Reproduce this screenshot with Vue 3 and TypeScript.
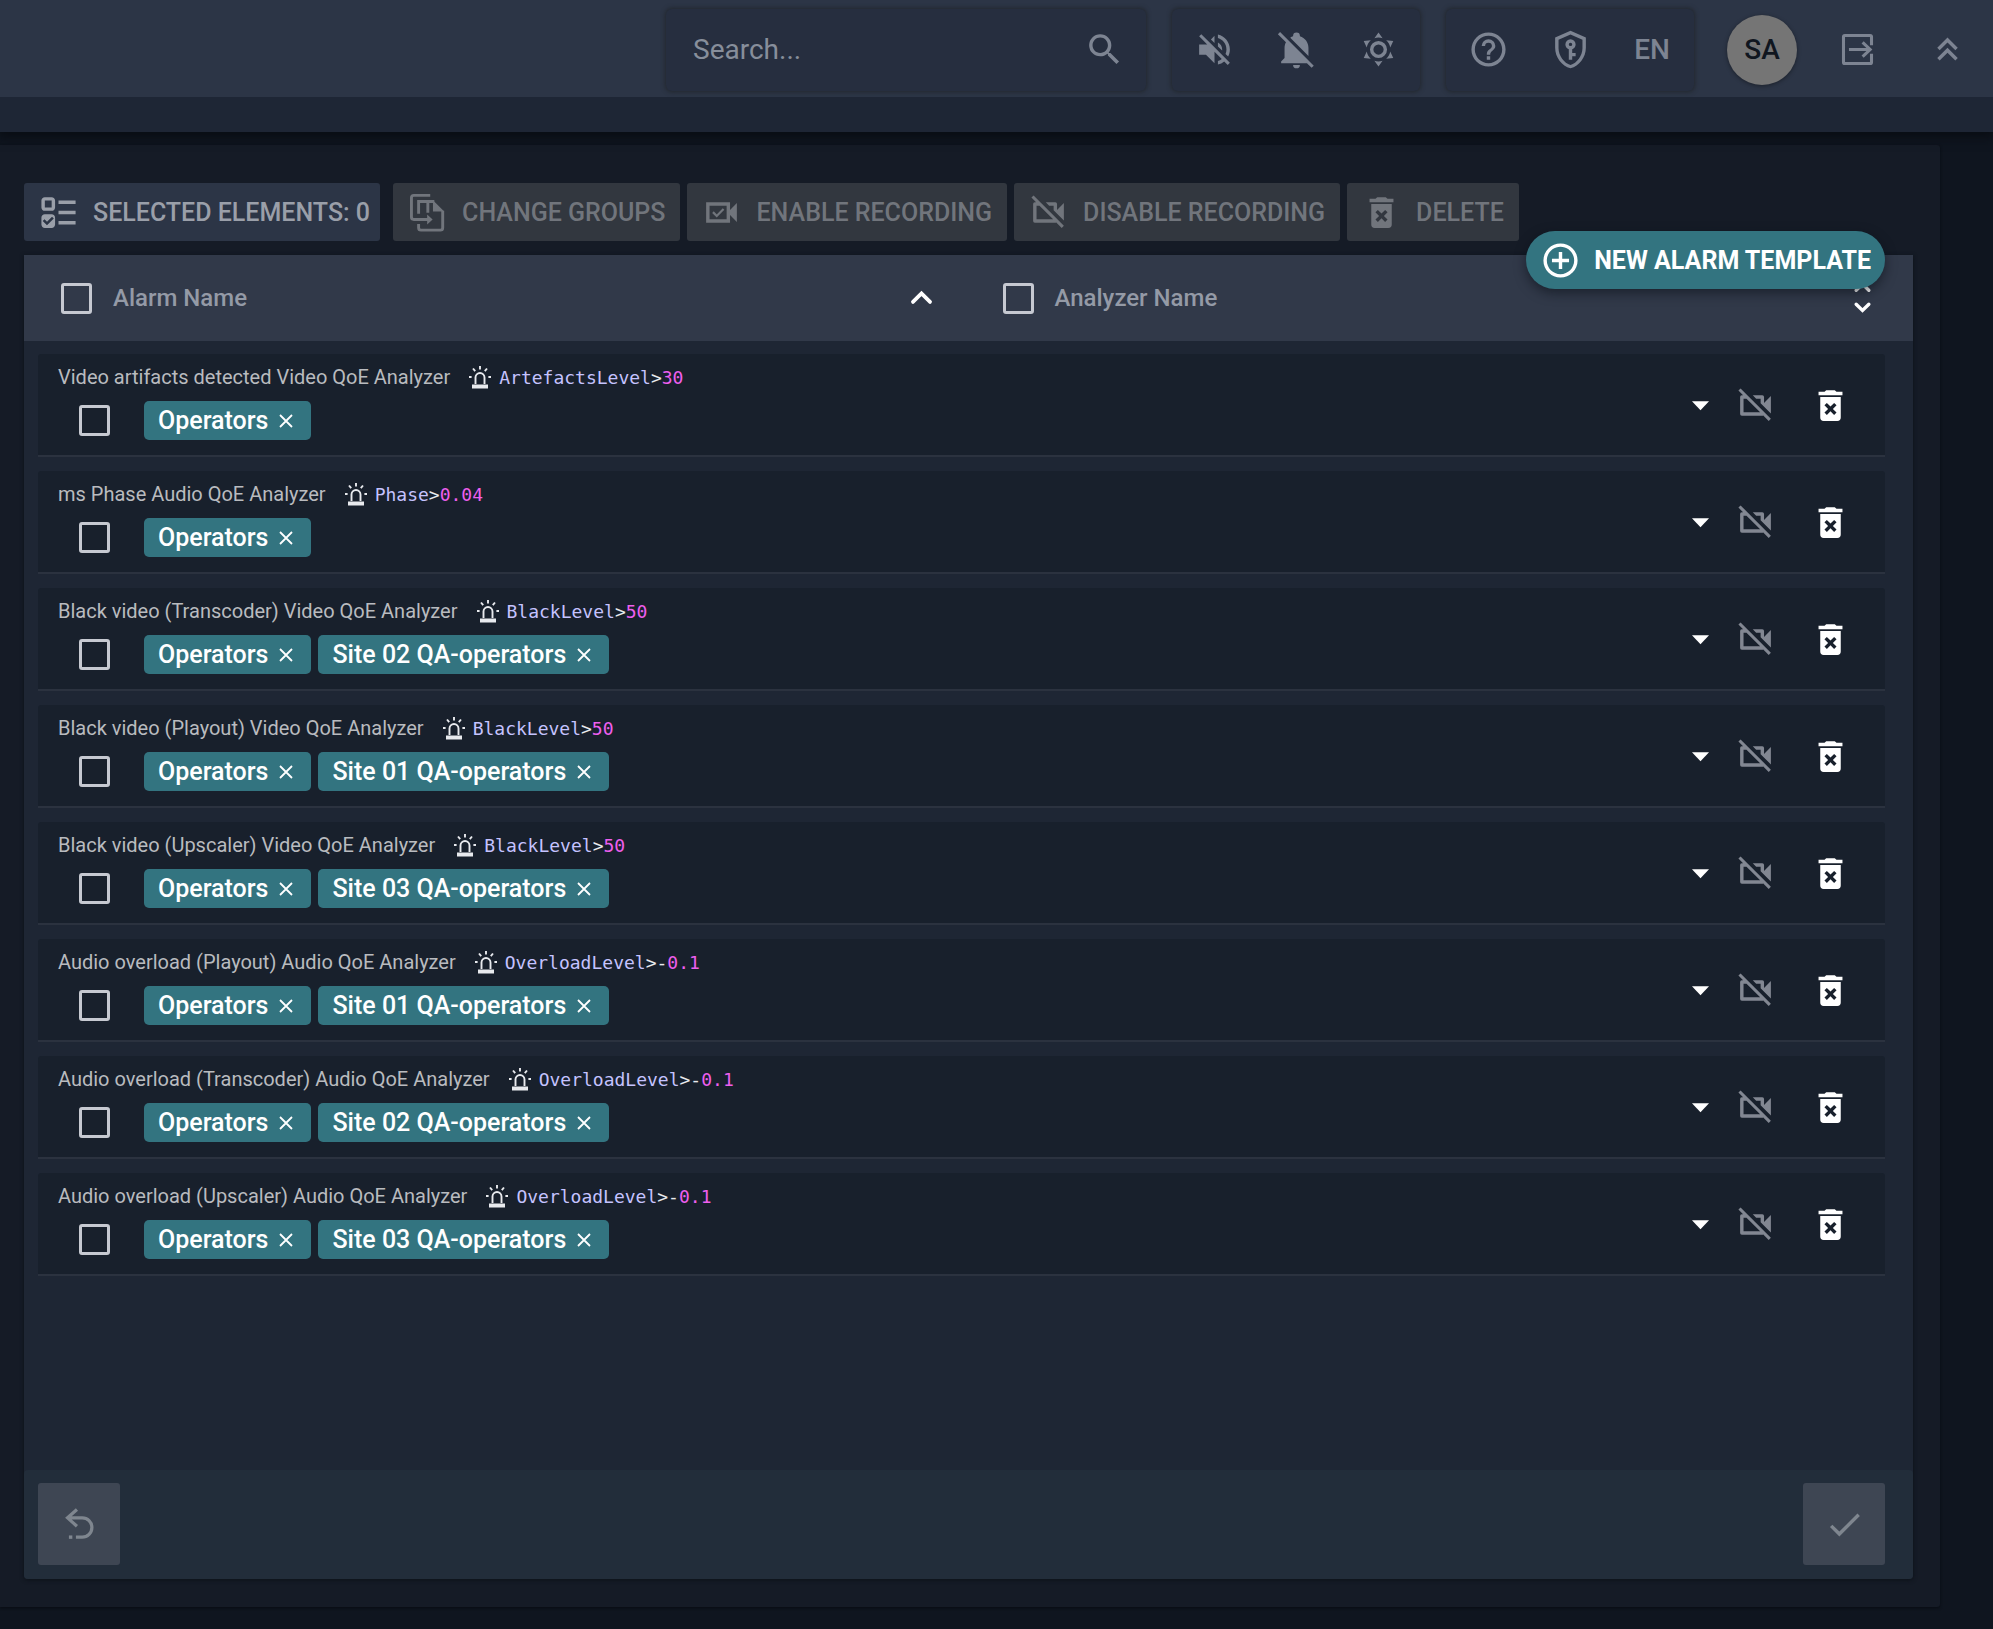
<script setup lang="ts">
import { h, ref, type FunctionalComponent } from 'vue'

interface Glyph {
  fill?: string
  stroke?: string
  width?: number
  round?: boolean
}

const glyphs: Record<string, Glyph> = {
  search: { fill: 'M9.5,3A6.5,6.5 0 0,1 16,9.5C16,11.11 15.41,12.59 14.44,13.73L14.71,14H15.5L20.5,19L19,20.5L14,15.5V14.71L13.73,14.44C12.59,15.41 11.11,16 9.5,16A6.5,6.5 0 0,1 3,9.5A6.5,6.5 0 0,1 9.5,3M9.5,5C7,5 5,7 5,9.5C5,12 7,14 9.5,14C12,14 14,12 14,9.5C14,7 12,5 9.5,5Z' },
  muted: { fill: 'M12,4L9.91,6.09L12,8.18M4.27,3L3,4.27L7.73,9H3V15H7L12,20V13.27L16.25,17.53C15.58,18.04 14.83,18.46 14,18.7V20.77C15.38,20.45 16.63,19.82 17.68,18.96L19.73,21L21,19.73L12,10.73M19,12C19,12.94 18.8,13.82 18.46,14.64L19.97,16.15C20.62,14.91 21,13.5 21,12C21,7.72 18,4.14 14,3.23V5.29C16.89,6.15 19,8.83 19,12M16.5,12C16.5,10.23 15.5,8.71 14,7.97V10.18L16.45,12.63C16.5,12.43 16.5,12.21 16.5,12Z' },
  bellOff: { fill: 'M22.11,21.46L2.39,1.73L1.11,3L5.83,7.72C5.29,8.73 5,9.86 5,11V17L3,19V20H18.11L20.84,22.73L22.11,21.46M10,21H14A2,2 0 0,1 12,23A2,2 0 0,1 10,21M19,15.8L8.34,5.14C8.85,4.77 9.41,4.48 10,4.29C10,4.19 10,4.1 10,4A2,2 0 0,1 12,2A2,2 0 0,1 14,4C14,4.1 14,4.19 14,4.29C16.97,5.17 19,7.9 19,11V15.8Z' },
  sun: { fill: 'M12,7A5,5 0 0,1 17,12A5,5 0 0,1 12,17A5,5 0 0,1 7,12A5,5 0 0,1 12,7M12,9A3,3 0 0,0 9,12A3,3 0 0,0 12,15A3,3 0 0,0 15,12A3,3 0 0,0 12,9M12,2L14.39,5.42C13.65,5.15 12.84,5 12,5C11.16,5 10.35,5.15 9.61,5.42L12,2M3.34,7L7.5,6.65C6.9,7.16 6.36,7.78 5.94,8.5C5.5,9.24 5.25,10 5.11,10.79L3.34,7M3.36,17L5.12,13.23C5.26,14 5.53,14.78 5.95,15.5C6.37,16.24 6.91,16.86 7.5,17.37L3.36,17M20.65,7L18.88,10.79C18.74,10 18.47,9.23 18.05,8.5C17.63,7.78 17.1,7.15 16.5,6.64L20.65,7M20.64,17L16.5,17.36C17.09,16.85 17.62,16.22 18.04,15.5C18.46,14.77 18.73,14 18.87,13.21L20.64,17M12,22L9.59,18.56C10.33,18.83 11.14,19 12,19C12.82,19 13.63,18.83 14.37,18.56L12,22Z' },
  help: { fill: 'M11,18H13V16H11V18M12,2A10,10 0 0,0 2,12A10,10 0 0,0 12,22A10,10 0 0,0 22,12A10,10 0 0,0 12,2M12,20C7.59,20 4,16.41 4,12C4,7.59 7.59,4 12,4C16.41,4 20,7.59 20,12C20,16.41 16.41,20 12,20M12,6A4,4 0 0,0 8,10H10A2,2 0 0,1 12,8A2,2 0 0,1 14,10C14,12 11,11.75 11,15H13C13,12.75 16,12.5 16,10A4,4 0 0,0 12,6Z' },
  shield: { fill: 'M21,11C21,16.55 17.16,21.74 12,23C6.84,21.74 3,16.55 3,11V5L12,1L21,5V11M12,21C15.75,20 19,15.54 19,11.22V6.3L12,3.18L5,6.3V11.22C5,15.54 8.25,20 12,21M12,6A3,3 0 0,1 15,9C15,10.31 14.17,11.42 13,11.83V14H15V16H13V18H11V11.83C9.83,11.42 9,10.31 9,9A3,3 0 0,1 12,6M12,8A1,1 0 0,0 11,9A1,1 0 0,0 12,10A1,1 0 0,0 13,9A1,1 0 0,0 12,8Z' },
  logout: { stroke: 'M20.2,9.5V4.6A.8,.8 0 0,0 19.4,3.8H4.6A.8,.8 0 0,0 3.8,4.6V19.4A.8,.8 0 0,0 4.6,20.2H19.4A.8,.8 0 0,0 20.2,19.4V14.5M7,12H19.6M15,7.8L19.4,12L15,16.2', width: 1.8 },
  collapse: { fill: 'M7.41,18.41L6,17L12,11L18,17L16.59,18.41L12,13.83L7.41,18.41M7.41,12.41L6,11L12,5L18,11L16.59,12.41L12,7.83L7.41,12.41Z' },
  checklist: { fill: 'M4 13C2.89 13 2 13.89 2 15V19C2 20.11 2.89 21 4 21H8C9.11 21 10 20.11 10 19V15C10 13.89 9.11 13 8 13M8.2 14.5L9.26 15.55L5.27 19.5L2.74 16.95L3.81 15.9L5.28 17.39M4 3C2.89 3 2 3.89 2 5V9C2 10.11 2.89 11 4 11H8C9.11 11 10 10.11 10 9V5C10 3.89 9.11 3 8 3M4 5H8V9H4M12 5H22V7H12M12 19V17H22V19M12 11H22V13H12Z' },
  groups: { fill: 'M15.2,4.8L21.8,11.4H15.2ZM11.8,13.2L15,16.1L11.8,19Z', stroke: 'M13.6,2H4A1.4,1.4 0 0,0 2.6,3.4V14.7A1.4,1.4 0 0,0 4,16.1H12.5M6.8,12.8V5.6H16M12.2,5.6V12.2M6.8,18.8V20.9A1.4,1.4 0 0,0 8.2,22.3H19.5A1.4,1.4 0 0,0 20.9,20.9V11', width: 1.7 },
  videoCheck: { fill: 'M3,6H17V10.5L21,6.5V17.5L17,13.5V18H3ZM5,8V16H15V8Z', stroke: 'M7,11.8L9.2,14L13.2,10', width: 1.3 },
  videoOff: { fill: 'M3.27,2L2,3.27L4.73,6H4A1,1 0 0,0 3,7V17A1,1 0 0,0 4,18H16C16.21,18 16.39,17.92 16.55,17.82L19.73,21L21,19.73L3.27,2M5,16V8H6.73L14.73,16H5M15,8V10.61L21,16.61V6.5L17,10.5V7A1,1 0 0,0 16,6H10.39L12.39,8H15Z' },
  trash: { fill: 'M6,19A2,2 0 0,0 8,21H16A2,2 0 0,0 18,19V7H6V19M8.46,11.88L9.87,10.47L12,12.59L14.12,10.47L15.53,11.88L13.41,14L15.53,16.12L14.12,17.53L12,15.41L9.88,17.53L8.47,16.12L10.59,14L8.46,11.88M15.5,4L14.5,3H9.5L8.5,4H5V6H19V4H15.5Z' },
  plus: { fill: 'M12,20C7.59,20 4,16.41 4,12C4,7.59 7.59,4 12,4C16.41,4 20,7.59 20,12C20,16.41 16.41,20 12,20M12,2A10,10 0 0,0 2,12A10,10 0 0,0 12,22A10,10 0 0,0 22,12A10,10 0 0,0 12,2M13,7H11V11H7V13H11V17H13V13H17V11H13V7Z' },
  sortUp: { stroke: 'M7,14L12,9L17,14', width: 2.2, round: true },
  sortBoth: { stroke: 'M8.3,7.2L12,3.6L15.7,7.2M8.3,15.4L12,19L15.7,15.4', width: 2, round: true },
  caret: { fill: 'M7,9.5H17L12,14.8Z' },
  siren: { fill: 'M4,19.5H20V23.5H4Z', stroke: 'M7.5,19V12.5A4.5,4.5 0 0,1 16.5,12.5V19M12,1V4.5M5,3.5L7.2,6.2M19,3.5L16.8,6.2M1,12H3.6M20.4,12H23', width: 1.9 },
  close: { stroke: 'M4,4L20,20M20,4L4,20', width: 2.4 },
  undo: { fill: 'M5.8,18.4H7.8V20.4H5.8Z', stroke: 'M10.5,3.2L5,8.1L10.5,13M5,8.1H13.6A5.6,5.6 0 0,1 13.6,19.4H9.9', width: 1.9 },
  check: { fill: 'M21,7L9,19L3.5,13.5L4.91,12.09L9,16.17L19.59,5.59L21,7Z' },
}

const Icon: FunctionalComponent<{ name: string }> = (props) => {
  const g = glyphs[props.name]
  return h('svg', { viewBox: '0 0 24 24', 'aria-hidden': 'true' }, [
    g.fill ? h('path', { d: g.fill, fill: 'currentColor', 'fill-rule': 'evenodd' }) : null,
    g.stroke
      ? h('path', {
          d: g.stroke,
          fill: 'none',
          stroke: 'currentColor',
          'stroke-width': g.width,
          'stroke-linecap': g.round ? 'round' : 'butt',
        })
      : null,
  ])
}
Icon.props = ['name']

interface Alarm {
  title: string
  metric: string
  sign: string
  value: string
  groups: string[]
}

const alarms = ref<Alarm[]>([
  { title: 'Video artifacts detected Video QoE Analyzer', metric: 'ArtefactsLevel', sign: '>', value: '30', groups: ['Operators'] },
  { title: 'ms Phase Audio QoE Analyzer', metric: 'Phase', sign: '>', value: '0.04', groups: ['Operators'] },
  { title: 'Black video (Transcoder) Video QoE Analyzer', metric: 'BlackLevel', sign: '>', value: '50', groups: ['Operators', 'Site 02 QA-operators'] },
  { title: 'Black video (Playout) Video QoE Analyzer', metric: 'BlackLevel', sign: '>', value: '50', groups: ['Operators', 'Site 01 QA-operators'] },
  { title: 'Black video (Upscaler) Video QoE Analyzer', metric: 'BlackLevel', sign: '>', value: '50', groups: ['Operators', 'Site 03 QA-operators'] },
  { title: 'Audio overload (Playout) Audio QoE Analyzer', metric: 'OverloadLevel', sign: '>-', value: '0.1', groups: ['Operators', 'Site 01 QA-operators'] },
  { title: 'Audio overload (Transcoder) Audio QoE Analyzer', metric: 'OverloadLevel', sign: '>-', value: '0.1', groups: ['Operators', 'Site 02 QA-operators'] },
  { title: 'Audio overload (Upscaler) Audio QoE Analyzer', metric: 'OverloadLevel', sign: '>-', value: '0.1', groups: ['Operators', 'Site 03 QA-operators'] },
])

const bulkActions = [
  { icon: 'groups', label: 'CHANGE GROUPS' },
  { icon: 'videoCheck', label: 'ENABLE RECORDING' },
  { icon: 'videoOff', label: 'DISABLE RECORDING' },
  { icon: 'trash', label: 'DELETE' },
]

const query = ref('')

function removeGroup(alarm: Alarm, group: string) {
  alarm.groups = alarm.groups.filter((g) => g !== group)
}
</script>

<template>
  <div class="page">
    <header class="topbar">
      <label class="box search">
        <input v-model="query" type="text" placeholder="Search..." aria-label="Search" />
        <Icon name="search" class="icon" />
      </label>
      <div class="box group">
        <button type="button" aria-label="Sound off"><Icon name="muted" class="icon" /></button>
        <button type="button" aria-label="Notifications off"><Icon name="bellOff" class="icon" /></button>
        <button type="button" aria-label="Theme"><Icon name="sun" class="icon" /></button>
      </div>
      <div class="box group">
        <button type="button" aria-label="Help"><Icon name="help" class="icon" /></button>
        <button type="button" aria-label="Access"><Icon name="shield" class="icon" /></button>
        <button type="button" class="lang">EN</button>
      </div>
      <div class="account">
        <button type="button" class="avatar">SA</button>
        <button type="button" class="logout" aria-label="Log out"><Icon name="logout" class="icon" /></button>
        <button type="button" class="collapse" aria-label="Collapse"><Icon name="collapse" class="icon" /></button>
      </div>
    </header>
    <div class="strip"></div>

    <main class="panel">
      <div class="toolbar">
        <button type="button" class="tool selected">
          <Icon name="checklist" class="icon" /><span>SELECTED ELEMENTS: 0</span>
        </button>
        <button v-for="action in bulkActions" :key="action.label" type="button" class="tool" disabled>
          <Icon :name="action.icon" class="icon" /><span>{{ action.label }}</span>
        </button>
      </div>

      <section class="card">
        <button type="button" class="create"><Icon name="plus" class="icon" /><span>NEW ALARM TEMPLATE</span></button>

        <div class="columns">
          <div class="column">
            <label><input type="checkbox" class="tick" />Alarm Name</label>
            <button type="button" class="sort" aria-label="Sort by alarm name"><Icon name="sortUp" class="icon" /></button>
          </div>
          <div class="column">
            <label><input type="checkbox" class="tick" />Analyzer Name</label>
            <button type="button" class="sort" aria-label="Sort by analyzer name"><Icon name="sortBoth" class="icon" /></button>
          </div>
        </div>

        <ul class="list">
          <li v-for="alarm in alarms" :key="alarm.title" class="row">
            <div class="info">
              <div class="title">
                <span>{{ alarm.title }}</span>
                <Icon name="siren" class="siren" />
                <code><span class="metric">{{ alarm.metric }}</span>{{ alarm.sign }}<span class="value">{{ alarm.value }}</span></code>
              </div>
              <div class="tags">
                <input type="checkbox" class="tick" :aria-label="alarm.title" />
                <span v-for="group in alarm.groups" :key="group" class="chip">
                  {{ group }}
                  <button type="button" :aria-label="`Remove ${group}`" @click="removeGroup(alarm, group)">
                    <Icon name="close" class="cross" />
                  </button>
                </span>
              </div>
            </div>
            <div class="actions">
              <button type="button" aria-label="Expand"><Icon name="caret" class="icon" /></button>
              <button type="button" class="dim" aria-label="Recording off"><Icon name="videoOff" class="icon" /></button>
              <button type="button" class="remove" aria-label="Delete"><Icon name="trash" class="icon" /></button>
            </div>
          </li>
        </ul>

        <footer class="footer">
          <button type="button" aria-label="Undo" disabled><Icon name="undo" class="icon" /></button>
          <button type="button" aria-label="Apply" disabled><Icon name="check" class="icon" /></button>
        </footer>
      </section>
    </main>
  </div>
</template>

<style>
body {
  margin: 0;
  background: #0f151f;
}
</style>

<style scoped>
* {
  box-sizing: border-box;
}

.page {
  display: flex;
  flex-direction: column;
  min-height: 100vh;
  background: #0f151f;
  color: #fff;
  font-family: Roboto, "Liberation Sans", sans-serif;
  font-size: 24px;
}

button,
input {
  margin: 0;
  padding: 0;
  border: 0;
  background: none;
  color: inherit;
  font: inherit;
}

button {
  display: flex;
  align-items: center;
  justify-content: center;
}

.icon {
  display: block;
  flex: none;
  width: 41px;
  height: 41px;
}

/* Top bar */
.topbar {
  position: relative;
  z-index: 1;
  display: flex;
  align-items: center;
  justify-content: flex-end;
  gap: 26px;
  height: 97px;
  padding: 2px 5px 0 0;
  background: #2c3546;
  color: #7d8492;
  font-size: 28px;
}

.box {
  display: flex;
  align-items: center;
  height: 82px;
  border-radius: 6px;
  background: #262e3f;
  box-shadow: 0 0 4px 1px #22272e;
}

.search {
  width: 480px;
  padding: 0 21px 0 27px;
}

.search input {
  flex: 1;
  min-width: 0;
  outline: none;
}

.search input::placeholder {
  color: #878e9b;
  opacity: 1;
}

.group {
  padding: 0 1px;
}

.group button {
  width: 82px;
  height: 82px;
}

.lang {
  font-weight: 500;
}

.account {
  display: flex;
  align-items: center;
  padding-left: 7px;
}

.avatar {
  width: 70px;
  height: 70px;
  border-radius: 50%;
  background: #757575;
  box-shadow: 0 1px 4px rgba(0, 0, 0, 0.4);
  color: #10161f;
  font-weight: 500;
}

.logout,
.collapse {
  width: 82px;
  height: 82px;
}

.logout {
  margin: 0 8px 0 19px;
}

.strip {
  position: relative;
  flex: none;
  height: 35px;
  background: #1e2635;
  box-shadow: 0 3px 10px 2px #090d13;
}

/* Main panel */
.panel {
  display: flex;
  flex: 1;
  flex-direction: column;
  gap: 14px;
  margin: 13px 53px 22px 0;
  padding: 38px 27px 28px 24px;
  border-radius: 0 3px 3px 0;
  background: #151b26;
  box-shadow: 0 1px 3px #080c12;
}

.toolbar {
  display: flex;
  gap: 7px;
}

.tool {
  gap: 14px;
  height: 58px;
  padding: 0 15px 0 14px;
  border-radius: 3px;
  background: #32373f;
  color: #71757c;
  font-size: 25px;
  font-weight: 500;
}

.tool.selected {
  margin-right: 6px;
  padding-right: 10px;
  background: #2c3546;
  color: #9a9fa9;
}

.card {
  position: relative;
  display: flex;
  flex: 1;
  flex-direction: column;
  border-radius: 0 0 4px 4px;
  background: #1e2634;
  box-shadow: 0 1px 4px #0c1118;
}

.create {
  position: absolute;
  top: -24px;
  right: 28px;
  gap: 13px;
  height: 58px;
  padding: 0 14px;
  border-radius: 29px;
  background: #337480;
  box-shadow: 0 4px 12px rgba(10, 14, 22, 0.55);
  font-size: 25px;
  font-weight: 700;
}

.columns {
  display: flex;
  height: 86px;
  padding-right: 6px;
  background: #313949;
  color: #949aa6;
  font-weight: 500;
}

.column {
  display: flex;
  flex: 1;
  align-items: center;
  justify-content: space-between;
  padding: 0 24px 0 37px;
}

.column label {
  display: flex;
  align-items: center;
  gap: 21px;
}

.sort {
  color: #fff;
}

.tick {
  flex: none;
  width: 31px;
  height: 31px;
  appearance: none;
  border: 3px solid #c6c9d1;
  border-radius: 3px;
}

/* Alarm rows */
.list {
  display: flex;
  flex: 1;
  flex-direction: column;
  gap: 14px;
  margin: 0;
  padding: 13px 28px 14px 14px;
  list-style: none;
}

.row {
  display: flex;
  justify-content: space-between;
  height: 103px;
  padding: 0 34px 0 20px;
  border-bottom: 2px solid #2b323f;
  border-radius: 3px 3px 0 0;
  background: #18202c;
}

.info {
  display: flex;
  flex-direction: column;
}

.title {
  display: flex;
  align-items: center;
  height: 46px;
  color: #b9bbbf;
  font-size: 20px;
}

.siren {
  width: 24px;
  height: 24px;
  margin: 0 7px 0 18px;
  color: #e8eaee;
}

code {
  color: #e8eaee;
  font-family: "DejaVu Sans Mono", monospace;
  font-size: 18px;
}

.metric {
  color: #c5c3ff;
}

.value {
  color: #ee5fee;
}

.tags {
  display: flex;
  align-items: center;
  gap: 7px;
  padding-left: 21px;
}

.tags .tick {
  margin-right: 27px;
}

.chip {
  display: flex;
  align-items: center;
  gap: 9px;
  height: 39px;
  margin-top: 1px;
  padding: 0 16px 0 14px;
  border-radius: 5px;
  background: #337480;
  font-size: 25px;
  font-weight: 500;
}

.cross {
  display: block;
  width: 18px;
  height: 18px;
}

.actions {
  display: flex;
  align-items: center;
  padding-top: 2px;
}

.actions .dim {
  margin-left: 14px;
  color: #828792;
}

.actions .remove {
  margin-left: 34px;
}

/* Card footer */
.footer {
  display: flex;
  justify-content: space-between;
  padding: 13px 28px 14px 14px;
  border-radius: 4px;
  background: #222d3a;
}

.footer button {
  width: 82px;
  height: 82px;
  border-radius: 3px;
  background: #3e4653;
  color: #7f868f;
}
</style>
